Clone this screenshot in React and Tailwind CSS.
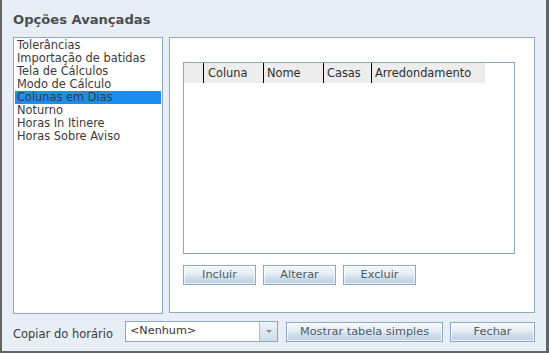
import React from "react";

const items = [
  "Tolerâncias",
  "Importação de batidas",
  "Tela de Cálculos",
  "Modo de Cálculo",
  "Colunas em Dias",
  "Noturno",
  "Horas In Itinere",
  "Horas Sobre Aviso",
];

function Btn({ children, w, h = "h-[20px]" }) {
  return (
    <button
      className={`${w} ${h} box-border border border-[#8ea9c4] bg-[linear-gradient(to_bottom,#f5f8fb_0%,#e6edf4_45%,#d3e0ec_60%,#bccfe2_100%)] text-[11.3px] leading-none text-[#4d5b69] shadow-[inset_0_0_0_1px_rgba(255,255,255,0.7)] flex items-center justify-center`}
    >
      {children}
    </button>
  );
}

export default function App() {
  return (
    <div
      className="w-[549px] h-[353px] box-border bg-[#e8eef5] border-l-2 border-r-[3px] border-b-2 border-[#636363] relative overflow-hidden"
      style={{ fontFamily: '"DejaVu Sans", Verdana, sans-serif' }}
    >
      <div className="h-[37px] pl-[11px] pt-[12px] text-[13.1px] leading-[16px] font-bold text-[#4a4e54]">
        Opções Avançadas
      </div>
      <div className="flex pl-[11px] gap-[6px]">
        <div className="w-[150px] h-[277px] box-border border border-[#8fa7bf] bg-white pt-[1px] px-[1px]">
          {items.map((t, i) => (
            <div
              key={t}
              className={`h-[13px] pl-[2px] text-[11.4px] leading-[13px] whitespace-nowrap text-[#3a3a3a] ${
                i === 4 ? "bg-[#1b8ef0]" : ""
              }`}
            >
              {t}
            </div>
          ))}
        </div>
        <div className="w-[366px] h-[276px] box-border border border-[#8fa7bf] bg-white pt-[24px] pl-[13px]">
          <div className="w-[332px] h-[192px] box-border border border-[#8fa7bf] bg-white">
            <div className="flex h-[20px] w-[301px] bg-[#ededed] text-[11.4px] text-[#2e2e2e] leading-[21px]">
              <div className="w-[19px]" />
              <div className="w-[60px] border-l border-black pl-[4px]">Coluna</div>
              <div className="w-[60px] border-l border-black pl-[3px]">Nome</div>
              <div className="w-[48px] border-l border-black pl-[3px]">Casas</div>
              <div className="w-[114px] border-l border-black pl-[3px]">Arredondamento</div>
            </div>
          </div>
          <div className="flex gap-[7px] mt-[11px]">
            <Btn w="w-[73px]">Incluir</Btn>
            <Btn w="w-[73px]">Alterar</Btn>
            <Btn w="w-[73px]">Excluir</Btn>
          </div>
        </div>
      </div>
      <div className="flex items-start pl-[11px] mt-[7px]">
        <div className="w-[112px] pt-[7px] text-[11.5px] leading-[13px] text-[#3a3a3a] whitespace-nowrap">
          Copiar do horário
        </div>
        <div className="w-[153px] h-[21px] box-border border border-[#8fa7bf] bg-white flex">
          <div className="flex-1 pl-[4px] pt-[2px] text-[11.2px] leading-[13px] text-[#333]">&lt;Nenhum&gt;</div>
          <div className="w-[18px] h-full border-l border-[#a9bdd1] bg-[linear-gradient(to_bottom,#eef3f8,#cfdcea)] flex items-center justify-center">
            <div className="w-0 h-0 border-l-[3px] border-r-[3px] border-t-[3px] border-l-transparent border-r-transparent border-t-[#7d8a97]" />
          </div>
        </div>
        <div className="ml-[8px] mt-[1px]">
          <Btn w="w-[157px]">Mostrar tabela simples</Btn>
        </div>
        <div className="ml-[7px] mt-[1px]">
          <Btn w="w-[85px]">Fechar</Btn>
        </div>
      </div>
    </div>
  );
}
